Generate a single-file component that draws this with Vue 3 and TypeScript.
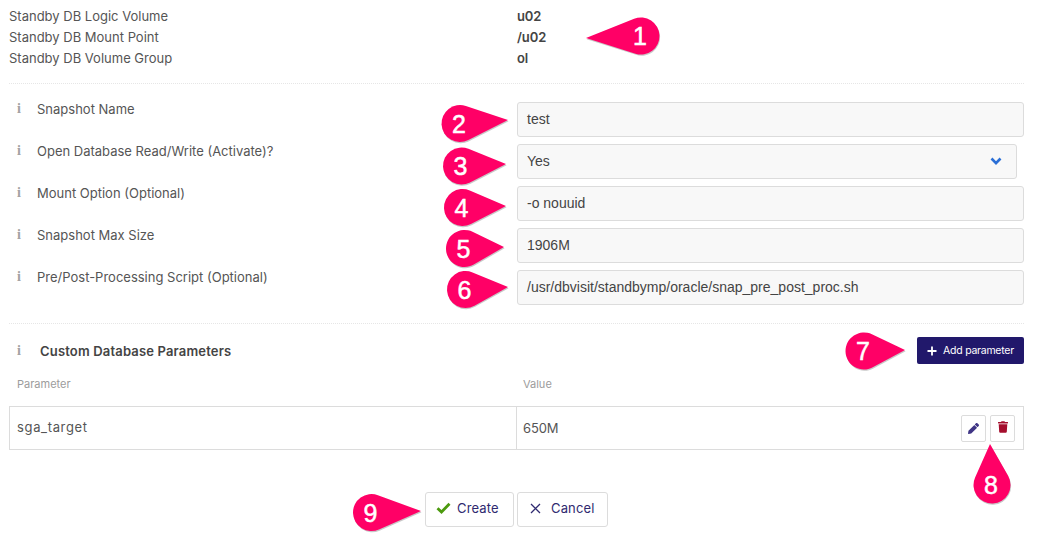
<script setup lang="ts">
interface Pin { n: number; cx: number; cy: number; r: number; tx: number; ty: number }

const info = [
  { label: 'Standby DB Logic Volume', value: 'u02' },
  { label: 'Standby DB Mount Point', value: '/u02' },
  { label: 'Standby DB Volume Group', value: 'ol' },
]

const fields = [
  { label: 'Snapshot Name', value: 'test', select: false },
  { label: 'Open Database Read/Write (Activate)?', value: 'Yes', select: true },
  { label: 'Mount Option (Optional)', value: '-o nouuid', select: false },
  { label: 'Snapshot Max Size', value: '1906M', select: false },
  { label: 'Pre/Post-Processing Script (Optional)', value: '/usr/dbvisit/standbymp/oracle/snap_pre_post_proc.sh', select: false },
]

const pins: Pin[] = [
  { n: 1, cx: 641, cy: 36, r: 18.5, tx: 586, ty: 38 },
  { n: 2, cx: 460, cy: 123.5, r: 18.5, tx: 508, ty: 120 },
  { n: 3, cx: 461.5, cy: 166, r: 18.5, tx: 506, ty: 164 },
  { n: 4, cx: 462.5, cy: 207.5, r: 18.5, tx: 506, ty: 206 },
  { n: 5, cx: 464.5, cy: 248.5, r: 18.5, tx: 504, ty: 247 },
  { n: 6, cx: 465.5, cy: 289.5, r: 18.5, tx: 508, ty: 287 },
  { n: 7, cx: 864, cy: 351, r: 18.5, tx: 905, ty: 350 },
  { n: 8, cx: 992, cy: 485, r: 18.5, tx: 990, ty: 444 },
  { n: 9, cx: 371.5, cy: 512.5, r: 18.5, tx: 421, ty: 511 },
]

function pinPath(p: Pin): string {
  const dx = p.tx - p.cx
  const dy = p.ty - p.cy
  const d = Math.hypot(dx, dy)
  const base = Math.atan2(dy, dx)
  const off = Math.acos(p.r / d)
  const a1 = base - off
  const a2 = base + off
  const x1 = p.cx + p.r * Math.cos(a1)
  const y1 = p.cy + p.r * Math.sin(a1)
  const x2 = p.cx + p.r * Math.cos(a2)
  const y2 = p.cy + p.r * Math.sin(a2)
  return `M${p.tx} ${p.ty}L${x2.toFixed(2)} ${y2.toFixed(2)}A${p.r} ${p.r} 0 1 1 ${x1.toFixed(2)} ${y1.toFixed(2)}Z`
}
</script>

<template>
  <div class="page">
    <section class="info">
      <div v-for="row in info" :key="row.label" class="info-row">
        <span class="info-label">{{ row.label }}</span>
        <strong class="info-value">{{ row.value }}</strong>
      </div>
    </section>

    <section class="form">
      <div v-for="f in fields" :key="f.label" class="field">
        <div class="field-label">
          <span class="i">i</span>
          <span>{{ f.label }}</span>
        </div>
        <div v-if="f.select" class="control select">
          <span>{{ f.value }}</span>
          <svg class="chev" width="12" height="9" viewBox="0 0 12 9" aria-hidden="true">
            <polyline points="1.5,1.5 6,6.2 10.5,1.5" fill="none" stroke="#2b6fd6" stroke-width="2.6" />
          </svg>
        </div>
        <div v-else class="control">{{ f.value }}</div>
      </div>
    </section>

    <section class="params">
      <div class="params-head">
        <div class="params-title">
          <span class="i">i</span>
          <span class="title-text">Custom Database Parameters</span>
        </div>
        <button class="add" type="button">
          <svg width="10" height="10" viewBox="0 0 10 10" aria-hidden="true">
            <path d="M5 .5v9M.5 5h9" stroke="#fff" stroke-width="1.8" fill="none" />
          </svg>
          <span>Add parameter</span>
        </button>
      </div>
      <div class="cols">
        <span class="col-a">Parameter</span>
        <span>Value</span>
      </div>
      <div class="table-row">
        <span class="cell-a">sga_target</span>
        <span class="cell-b">650M</span>
        <div class="actions">
          <button class="icon-btn" type="button" aria-label="Edit">
            <svg width="11" height="11" viewBox="0 0 512 512" aria-hidden="true">
              <path fill="#3f3585" d="M497.9 142.1l-46.1 46.1c-4.7 4.7-12.3 4.7-17 0l-111-111c-4.7-4.7-4.7-12.3 0-17l46.1-46.1c18.7-18.7 49.1-18.7 67.9 0l60.1 60.1c18.8 18.7 18.8 49.1 0 67.9zM284.2 99.8L21.6 362.4.4 483.9c-2.9 16.4 11.4 30.6 27.8 27.8l121.5-21.3 262.6-262.6c4.7-4.7 4.7-12.3 0-17l-111-111c-4.8-4.7-12.4-4.7-17.1 0z" />
            </svg>
          </button>
          <button class="icon-btn trash" type="button" aria-label="Delete">
            <svg width="10" height="12" viewBox="0 0 448 512" aria-hidden="true">
              <path fill="#a50e2d" d="M432 32H312l-9.4-18.7A24 24 0 0 0 281.1 0H166.8a23.72 23.72 0 0 0-21.4 13.3L136 32H16A16 16 0 0 0 0 48v32a16 16 0 0 0 16 16h416a16 16 0 0 0 16-16V48a16 16 0 0 0-16-16zM53.2 467a48 48 0 0 0 47.9 45h245.8a48 48 0 0 0 47.9-45L416 128H32z" />
            </svg>
          </button>
        </div>
      </div>
    </section>

    <div class="footer">
      <button class="foot-btn create" type="button">
        <svg width="15" height="12" viewBox="0 0 15 12" aria-hidden="true">
          <polyline points="1.5,6.2 5.5,10 13.5,1.8" fill="none" stroke="#4c9a0e" stroke-width="2.8" />
        </svg>
        <span>Create</span>
      </button>
      <button class="foot-btn cancel" type="button">
        <svg width="11" height="11" viewBox="0 0 11 11" aria-hidden="true">
          <path d="M1 1l9 9M10 1l-9 9" stroke="#2f2a70" stroke-width="1.3" fill="none" />
        </svg>
        <span>Cancel</span>
      </button>
    </div>

    <svg class="overlay" width="1049" height="539" viewBox="0 0 1049 539">
      <g v-for="p in pins" :key="p.n">
        <path :d="pinPath(p)" fill="#9a9a9a" opacity="0.55" transform="translate(0.6 1.2)" />
        <path :d="pinPath(p)" fill="#ff0066" />
        <text :x="p.cx - 1" :y="p.cy + 9" class="pin-num" text-anchor="middle">{{ p.n }}</text>
      </g>
    </svg>
  </div>
</template>

<style>
html, body { margin: 0; background: #fff; }
</style>

<style scoped>
.page {
  position: relative;
  width: 1049px;
  height: 539px;
  overflow: hidden;
  box-sizing: border-box;
  padding: 6px 25px 0 9px;
  font-family: Inter, Lato, sans-serif;
  font-size: 13px;
  color: #555;
  background: #fff;
}
.info {
  padding-bottom: 14px;
  border-bottom: 1px dotted #e6e6e6;
}
.info-row {
  display: flex;
  height: 21px;
  line-height: 21px;
}
.info-label { width: 508px; }
.info-value { font-weight: 600; color: #444; letter-spacing: -0.1px; }
.form {
  padding-top: 18px;
  padding-bottom: 14px;
  border-bottom: 1px dotted #e6e6e6;
}
.field {
  display: flex;
  height: 35px;
  margin-bottom: 7px;
}
.field:last-child { margin-bottom: 4px; }
.field-label {
  width: 508px;
  display: flex;
  align-items: flex-start;
  line-height: 15px;
}
.i {
  width: 28px;
  padding-left: 8px;
  box-sizing: border-box;
  font-family: "Liberation Serif", serif;
  font-weight: 700;
  font-size: 14px;
  line-height: 14px;
  color: #a3a3a3;
  flex: none;
}
.control {
  flex: 1;
  box-sizing: border-box;
  height: 35px;
  border: 1px solid #dcdcdc;
  border-radius: 3px;
  background: #f8f8f8;
  padding: 0 9px;
  line-height: 32px;
  font-family: "Liberation Sans", Arial, sans-serif;
  font-size: 14px;
  color: #444;
}
.select {
  flex: none;
  width: 500px;
  display: flex;
  align-items: center;
  justify-content: space-between;
  padding-right: 14px;
  line-height: normal;
}
.select span { position: relative; top: -1px; }
.params { padding-top: 13px; }
.params-head {
  display: flex;
  justify-content: space-between;
  align-items: center;
  height: 27px;
}
.params-title { display: flex; align-items: center; }
.params-title .i { width: 31px; }
.title-text { font-weight: 600; color: #444; letter-spacing: 0.17px; }
.add {
  display: flex;
  align-items: center;
  justify-content: center;
  gap: 6px;
  width: 107px;
  height: 27px;
  padding: 0 0 0 0;
  background: #21186b;
  color: #fff;
  border: 0;
  border-radius: 2px;
  font-family: Inter, Lato, sans-serif;
  font-size: 10.5px;
  letter-spacing: -0.25px;
}
.cols {
  display: flex;
  margin-top: 12px;
  height: 16px;
  line-height: 16px;
  font-size: 11px;
  color: #9c9c9c;
}
.col-a { width: 514px; padding-left: 8px; box-sizing: border-box; }
.table-row {
  display: flex;
  align-items: center;
  box-sizing: border-box;
  height: 44px;
  margin-top: 14px;
  border: 1px solid #dcdcdc;
}
.cell-a {
  box-sizing: border-box;
  width: 507px;
  height: 100%;
  line-height: 41px;
  padding-left: 7px;
  letter-spacing: 0.65px;
  border-right: 1px solid #dcdcdc;
}
.cell-b { flex: 1; padding-left: 6px; line-height: 41px; letter-spacing: -0.1px; }
.actions { display: flex; gap: 4px; padding-right: 8px; }
.icon-btn {
  width: 25px;
  height: 27px;
  padding: 0;
  display: flex;
  align-items: center;
  justify-content: center;
  background: #fff;
  border: 1px solid #dcdcdc;
  border-radius: 2px;
}
.trash { padding-bottom: 2px; }
.footer {
  display: flex;
  justify-content: flex-start;
  gap: 3px;
  margin-top: 42px;
  padding-left: 416px;
}
.foot-btn {
  display: flex;
  align-items: center;
  height: 35px;
  padding: 0 0 3px;
  background: #fff;
  border: 1px solid #dcdcdc;
  border-radius: 3px;
  font-family: Inter, Lato, sans-serif;
  font-size: 13px;
  letter-spacing: 0.15px;
  color: #2f2a70;
}
.create { width: 89px; padding-left: 10px; gap: 6px; }
.cancel { width: 91px; padding-left: 12px; gap: 10px; }
.overlay {
  position: absolute;
  left: 0;
  top: 0;
  pointer-events: none;
}
.pin-num {
  font-family: "Liberation Sans", sans-serif;
  font-size: 25px;
  font-weight: 400;
  fill: #fff;
  stroke: #fff;
  stroke-width: 0.5;
}
</style>
